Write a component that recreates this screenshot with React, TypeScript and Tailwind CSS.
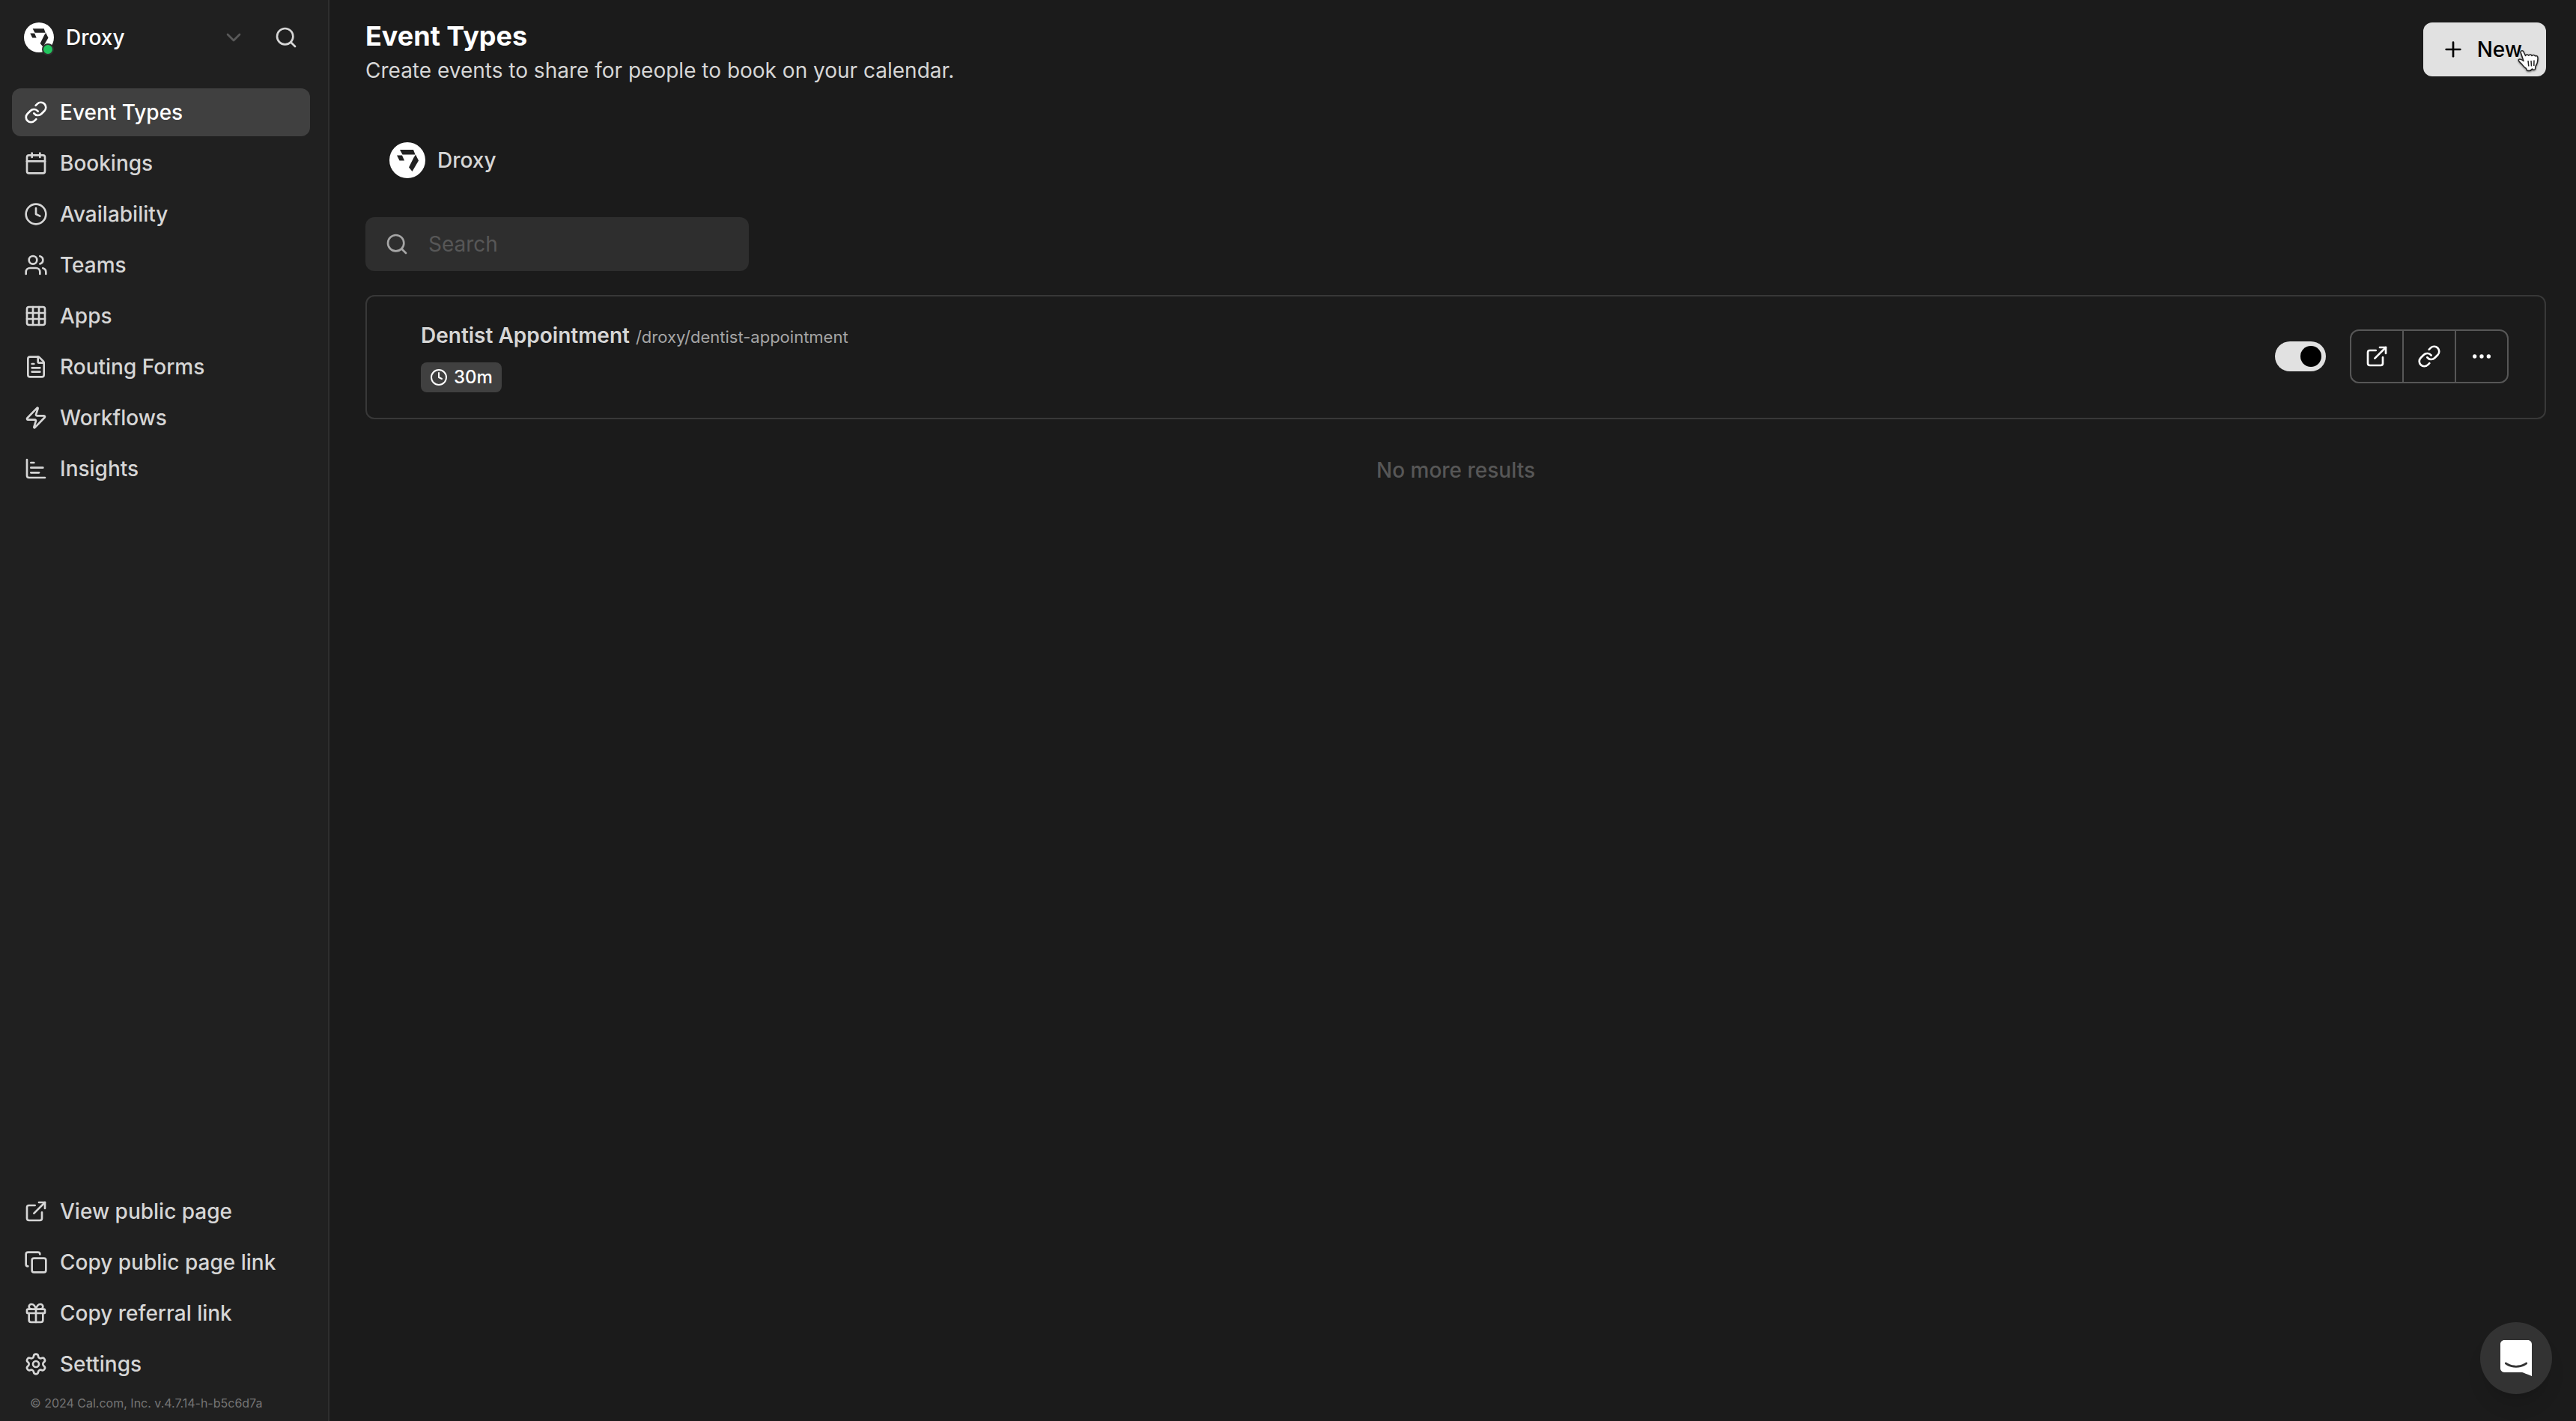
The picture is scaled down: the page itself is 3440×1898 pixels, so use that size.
import React from 'react';
import {
  Calendar,
  ChartBar,
  ChevronDown,
  Clock,
  Copy,
  Ellipsis,
  ExternalLink,
  FileText,
  Gift,
  Grid3x3,
  Link,
  LucideIcon,
  Plus,
  Search,
  Settings,
  Users,
  Zap,
} from 'lucide-react';

interface NavItem {
  name: string;
  icon: LucideIcon;
  current?: boolean;
}

const mainNav: NavItem[] = [
  { name: 'Event Types', icon: Link, current: true },
  { name: 'Bookings', icon: Calendar },
  { name: 'Availability', icon: Clock },
  { name: 'Teams', icon: Users },
  { name: 'Apps', icon: Grid3x3 },
  { name: 'Routing Forms', icon: FileText },
  { name: 'Workflows', icon: Zap },
  { name: 'Insights', icon: ChartBar },
];

const bottomNav: NavItem[] = [
  { name: 'View public page', icon: ExternalLink },
  { name: 'Copy public page link', icon: Copy },
  { name: 'Copy referral link', icon: Gift },
  { name: 'Settings', icon: Settings },
];

const Avatar: React.FC<{ className: string }> = ({ className }) => (
  <svg viewBox="0 0 48 48" className={className} aria-hidden="true">
    <circle cx="24" cy="24" r="24" fill="#fff" />
    <path d="M14 10H32L34.500 16.500H17.500Z" fill="#222" />
    <path d="M10 17.500H17L20 24.500H13.500Z" fill="#222" />
    <path d="M35 16.500L39 24.500L30.500 39L26 33.500L32.500 20.500Z" fill="#222" />
  </svg>
);

const NavLink: React.FC<{ item: NavItem }> = ({ item }) => {
  const Icon = item.icon;
  return (
    <a
      href="#"
      aria-current={item.current ? 'page' : undefined}
      className={`flex h-16 items-center gap-4 rounded-xl px-4 text-[28px] font-medium ${
        item.current ? 'bg-[#404040] text-white' : 'text-[#d6d6d6]'
      }`}
    >
      <Icon size={32} className="shrink-0" />
      <span className="whitespace-nowrap">{item.name}</span>
    </a>
  );
};

const Sidebar: React.FC = () => (
  <aside className="flex w-[440px] shrink-0 flex-col justify-between border-r-2 border-[#2e2e2e] bg-[#202020] pr-6 pl-4">
    <div>
      {/* Profile */}
      <header className="flex items-center justify-between pt-[30px] pb-12 pl-4">
        <button className="flex flex-1 items-center gap-4 text-white">
          <span className="relative block size-10">
            <Avatar className="size-10" />
            <span className="absolute right-0 -bottom-1 size-4 rounded-full border-2 border-[#303030] bg-[#22c55e]" />
          </span>
          <span className="flex-1 truncate text-left text-[28px] leading-9 font-medium">Droxy</span>
          <ChevronDown size={32} className="text-[#595959]" />
        </button>
        <button aria-label="Search" className="mr-4 ml-[38px] text-[#d6d6d6]">
          <Search size={32} />
        </button>
      </header>

      <nav className="flex flex-col gap-1">
        {mainNav.map((item) => (
          <NavLink key={item.name} item={item} />
        ))}
      </nav>
    </div>

    <div>
      <nav className="flex flex-col gap-1">
        {bottomNav.map((item) => (
          <NavLink key={item.name} item={item} />
        ))}
      </nav>
      <small className="block px-6 pt-2 pb-3 text-[16px] leading-6 text-[#757575]">
        © 2024 Cal.com, Inc. v.4.7.14-h-b5c6d7a
      </small>
    </div>
  </aside>
);

const HandCursor: React.FC = () => (
  <svg
    viewBox="0 0 28 32"
    className="pointer-events-none absolute right-2.5 bottom-1 h-8 w-7 drop-shadow-[0_1px_1px_rgba(0,0,0,0.5)]"
    aria-hidden="true"
  >
    <path
      d="M4 3.500C4.500 1.500 7 1.200 8 3.200L10.500 8.500C11 6.700 14 6.500 14.800 8.200C15.800 6.500 18.300 6.700 19 8.500C20.500 7 22.500 7 23.500 9C25.300 7.800 27 9 27 11.500C27.200 16 26.500 19 24 22.500L23.500 26.500C22 27.500 20.500 27.500 19.500 26C18 28.500 15.500 29 12.500 28L11.500 25.500C8.500 24 7 21 4.500 18.500C2.500 16.500 0.500 15.500 1.500 13.500C3 12 5.500 13.500 8 15.500Z"
      fill="#fff"
      stroke="#222"
      strokeWidth="1.500"
      strokeLinejoin="round"
    />
    <path d="M14 15L14.800 22.500M18 15L18.500 22.500M22 14.500L21.800 22" stroke="#222" strokeWidth="1.500" fill="none" />
  </svg>
);

const EventTypeRow: React.FC = () => (
  <li className="flex items-center justify-between rounded-xl border-2 border-[#383838] pt-8 pr-12 pb-[34px] pl-18">
    <div className="flex flex-col items-start gap-4">
      <a href="#" className="flex items-baseline gap-2 text-[#d6d6d6]">
        <span className="text-[28px] leading-10 font-semibold">Dentist Appointment</span>
        <small className="text-[22px] leading-8 text-[#a6a6a6]">/droxy/dentist-appointment</small>
      </a>
      <span className="flex h-10 items-center gap-2 rounded-lg bg-[#404040] px-3 text-[24px] font-medium text-white">
        <Clock size={24} />
        30m
      </span>
    </div>

    <div className="flex items-center gap-8">
      <input
        type="checkbox"
        role="switch"
        aria-label="Show on profile"
        defaultChecked
        className="flex h-10 w-[68px] appearance-none items-center rounded-full bg-[#e1e1e1] px-1.5 before:size-7 before:rounded-full before:bg-black checked:justify-end"
      />
      <div className="flex divide-x-2 divide-[#575757] rounded-xl border-2 border-[#575757] text-white">
        <button aria-label="Preview" className="flex h-17 w-[70px] items-center justify-center">
          <ExternalLink size={32} />
        </button>
        <button aria-label="Copy link" className="flex h-17 w-[70px] items-center justify-center">
          <Link size={32} />
        </button>
        <button aria-label="More options" className="flex h-17 w-[68px] items-center justify-center">
          <Ellipsis size={32} />
        </button>
      </div>
    </div>
  </li>
);

export default function App() {
  return (
    <div className="flex min-h-screen bg-[#1b1b1b] font-['Inter',sans-serif] text-[#d6d6d6]">
      <Sidebar />

      <main className="flex-1 px-12 pr-10 pt-[30px]">
        {/* Page heading */}
        <header className="flex items-start justify-between">
          <div>
            <h1 className="text-[36px] leading-9 font-bold text-white">Event Types</h1>
            <p className="text-[28px] leading-14">Create events to share for people to book on your calendar.</p>
          </div>
          <button className="relative flex h-18 items-center gap-4 rounded-xl bg-[#e1e1e1] pr-8 pl-6 text-[28px] font-medium text-black">
            <Plus size={32} />
            New
            <HandCursor />
          </button>
        </header>

        <a href="#" className="mt-15 ml-8 inline-flex h-16 items-center gap-4 text-[28px] font-medium">
          <Avatar className="size-12" />
          Droxy
        </a>

        <label className="mt-11 flex h-18 w-[512px] items-center gap-[26px] rounded-xl bg-[#2e2e2e] px-[26px]">
          <Search size={32} className="shrink-0 text-[#a6a6a6]" />
          <input
            type="search"
            aria-label="Search"
            placeholder="Search"
            className="w-full bg-transparent text-[28px] outline-none placeholder:text-[#575757]"
          />
        </label>

        <ul className="mt-8">
          <EventTypeRow />
        </ul>

        <p className="mt-12 text-center text-[28px] leading-10 font-medium text-[#575757]">No more results</p>
      </main>

      {/* Support chat launcher */}
      <button
        aria-label="Open chat"
        className="fixed right-8 bottom-9 flex size-24 items-center justify-center rounded-full bg-[#333333] shadow-xl"
      >
        <svg viewBox="0 0 28 32" className="h-12 w-[42px]" fill="#fff" aria-hidden="true">
          <path d="M28 32s-4.714-1.855-8.527-3.340H3.437C1.540 28.660 0 27.026 0 25.013V3.644C0 1.633 1.540 0 3.437 0h21.125c1.898 0 3.437 1.632 3.437 3.645v18.404H28V32zm-4.139-11.982a.88.88 0 00-1.292-.105c-.03.026-3.015 2.681-8.570 2.681-5.486 0-8.517-2.636-8.571-2.684a.88.88 0 00-1.290.107 1.010 1.010 0 00-.219.708.992.992 0 00.318.664c.142.128 3.537 3.150 9.762 3.150 6.226 0 9.621-3.022 9.763-3.150a.992.992 0 00.317-.664 1.010 1.010 0 00-.218-.707z" />
        </svg>
      </button>
    </div>
  );
}
